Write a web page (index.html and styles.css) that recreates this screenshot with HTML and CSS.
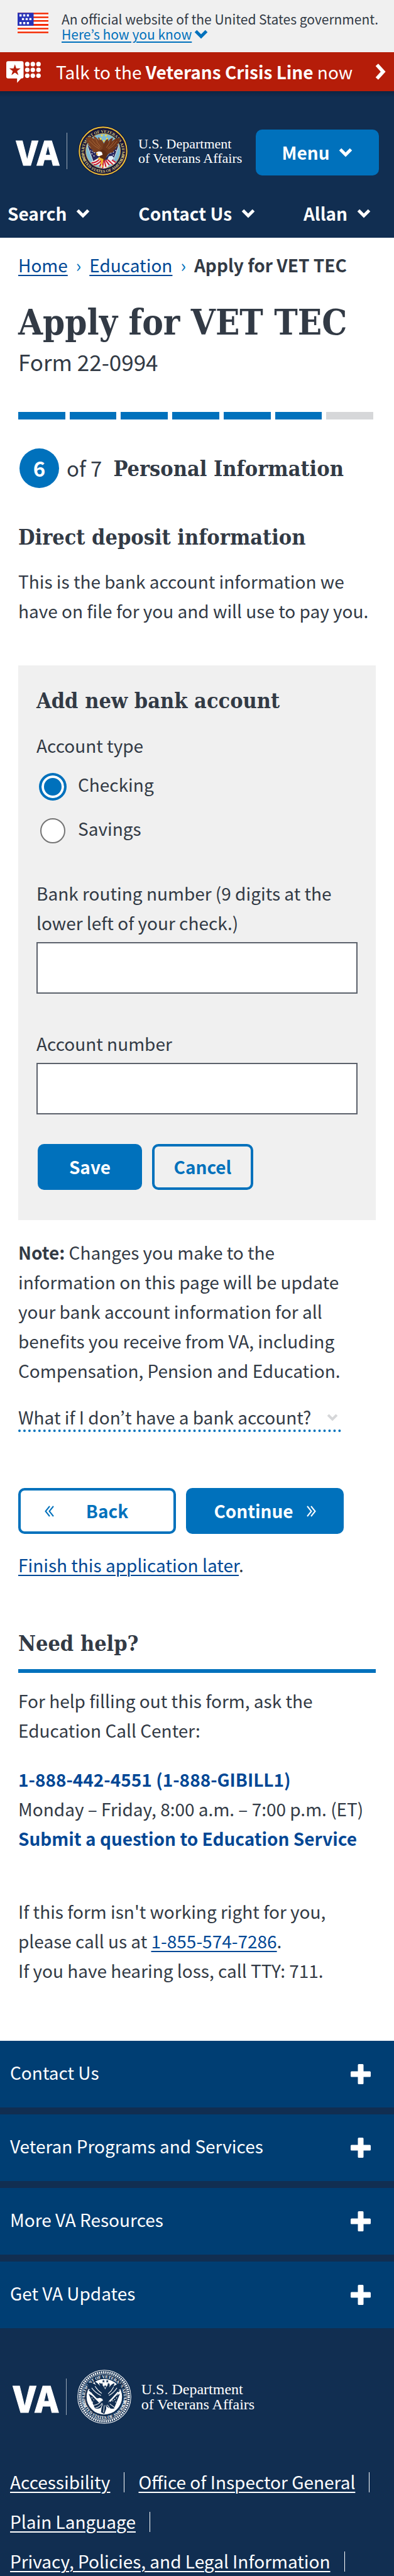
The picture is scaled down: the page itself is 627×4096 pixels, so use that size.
FILE: index.html
```html
<!DOCTYPE html>
<html lang="en">
<head>
<meta charset="utf-8">
<meta name="viewport" content="width=device-width, initial-scale=1">
<title>Apply for VET TEC</title>
<link rel="stylesheet" href="styles.css">
</head>
<body>
<svg class="defs" aria-hidden="true">
  <symbol id="chevron" viewBox="0 0 22 16"><path d="M2.5 3.5 11 12l8.5-8.5" fill="none" stroke="currentColor" stroke-width="5"/></symbol>
  <symbol id="plus" viewBox="0 0 32 32"><path d="M13 0h6a1.500 1.500 0 0 1 1.500 1.500v10h10A1.500 1.500 0 0 1 32 13v6a1.500 1.500 0 0 1-1.500 1.500h-10v10A1.500 1.500 0 0 1 19 32h-6a1.500 1.500 0 0 1-1.500-1.500v-10h-10A1.500 1.500 0 0 1 0 19v-6a1.500 1.500 0 0 1 1.500-1.500h10v-10A1.500 1.500 0 0 1 13 0z" fill="currentColor"/></symbol>
  <path id="arc-top" d="M-75 57A92 92 0 1 1 75 57" fill="none"/>
  <path id="arc-bottom" d="M-104 20A106 106 0 0 0 104 20" fill="none"/>
  <path id="wing-left" d="M-84-64q4 10 10 15 -6-1-8-3 4 14 16 20 -7 0-9-2 6 13 18 17 -7 1-10-1 8 12 20 14 -5 3-8 2 10 11 24 9l20 14 26-14-6-22c-2-24-14-40-32-52-2 6 2 14 4 18-8-12-18-20-28-24 0 6 4 12 8 18-12-10-26-14-45-9z"/>
  <path id="wing-right" d="M84-62q-4 10-10 15 6-1 8-3-4 14-16 20 7 0 9-2-6 13-18 17 7 1 10-1-8 12-20 14 5 3 8 2-10 11-22 10l-22 20-20-20 6-22c4-22 12-38 26-50 4 6 2 12 0 18 8-12 16-18 24-20 2 6-2 12-6 18 12-10 26-20 43-16z"/>
</svg>

<div class="gov">
  <svg class="flag" viewBox="0 0 50 34" aria-hidden="true">
    <rect width="50" height="33" fill="#fff"/>
    <path d="M0 0h50v2.500H0zM0 6h50v2.500H0zM0 12h50v2.500H0zM0 18h50v3H0zM0 24.500h50v2.500H0zM0 30.500h50v2.500H0z" fill="#f42a02"/>
    <path d="M0 0h26v21H0z" fill="#2632b8"/>
    <path d="M3 2.500h3.500v3.500H3zM9 2.500h3.500v3.500H9zM15 2.500h3.500v3.500H15zM7 8.500h3.500v3.500H7zM13 8.500h3.500v3.500H13zM19 8.500h3.500v3.500H19zM3 15h3.500v3.500H3zM9 15h3.500v3.500H9zM15 15h3.500v3.500H15z" fill="#fff"/>
  </svg>
  <div class="gov-text">
    <div>An official website of the United States government.</div>
    <a class="gov-link" href="#"><span>Here’s how you know</span><svg class="chev" aria-hidden="true"><use href="#chevron"/></svg></a>
  </div>
</div>

<a class="crisis" href="#">
  <svg class="crisis-icon" viewBox="0 0 56 35" fill="#fff" aria-hidden="true">
    <path d="M3 0h22a3 3 0 0 1 3 3v22a3 3 0 0 1-3 3h-1l-6.500 7v-7H3a3 3 0 0 1-3-3V3a3 3 0 0 1 3-3z"/>
    <path d="m14 5 2.200 6.700h7l-5.700 4.200 2.200 6.800-5.700-4.200-5.700 4.200 2.200-6.800-5.700-4.200h7z" fill="#b51d09"/>
    <circle cx="34" cy="4.700" r="3.700"/><circle cx="43" cy="4.700" r="3.700"/><circle cx="52.200" cy="4.700" r="3.700"/>
    <circle cx="34" cy="14" r="3.700"/><circle cx="43" cy="14" r="3.700"/><circle cx="52.200" cy="14" r="3.700"/>
    <circle cx="34" cy="23.400" r="3.700"/><circle cx="43" cy="23.400" r="3.700"/><circle cx="52.200" cy="23.400" r="3.700"/>
  </svg>
  <span class="crisis-text">Talk to the <b>Veterans Crisis Line</b> now</span>
  <svg class="crisis-arrow" viewBox="0 0 18 28" aria-hidden="true"><path d="m3 2.500 10.500 11.500L3 25.500" fill="none" stroke="#fff" stroke-width="6"/></svg>
</a>

<header class="header">
  <div class="header-top">
    <a class="logo" href="#" aria-label="U.S. Department of Veterans Affairs">
      <span class="va">VA</span>
      <span class="logo-rule"></span>
      <svg class="seal" viewBox="-122 -122 244 244">
        <circle r="121" fill="#17153a"/>
        <circle r="115" fill="none" stroke="#f0c436" stroke-width="6"/>
        <circle r="84" fill="#7db9d6" stroke="#d9b54a" stroke-width="3"/>
        <g class="seal-text" fill="#d9c679">
          <text><textPath href="#arc-top" startOffset="50%" text-anchor="middle">DEPARTMENT OF VETERANS AFFAIRS</textPath></text>
          <text><textPath href="#arc-bottom" startOffset="50%" text-anchor="middle">UNITED STATES OF AMERICA</textPath></text>
        </g>
        <circle cx="-97" cy="16" r="3" fill="#d9c679"/><circle cx="97" cy="16" r="3" fill="#d9c679"/>
        <path d="M-76-28-42 66Q-20 62-2 40L-40 4zM76-28 44 60Q20 60 8 40L40 4z" fill="#28285e"/>
        <path d="M-78-30-40 72M78-30 42 68" stroke="#e9e4d4" stroke-width="3"/>
        <path d="M-62-2l4 4m6-2 4 4m-8 8 4 4m8-10 4 4m-6 12 4 4m8-12 4 4M64-4l-4 4m-8 4-4 4m4 10-4 4m-8-14-4 4m4 14-4 4" stroke="#fff" stroke-width="4"/>
        <path d="M-60 54q24-8 50-30l10 24q20-2 30-14l36 20q-16 16-34 10-8 18-30 22-16-4-16-20-28 10-46-12z" fill="#f3eee6"/>
        <path d="M-56 58q26 0 46-26M-46 68q24-2 40-26M-16 76l12-32M-2 84l4-38M14 78 6 44M30 68 12 44M48 66 22 42M62 56 34 38" fill="none" stroke="#c9152e" stroke-width="6"/>
        <use href="#wing-left" fill="#7a3f1f"/><use href="#wing-right" fill="#6b3419"/>
        <path d="M-68-50q22 26 50 40M-54-54q14 22 38 38M-36-60q6 22 24 40M68-48q-18 26-42 40M54-48q-12 22-32 36M34-52q-4 20-18 36" fill="none" stroke="#a8683a" stroke-width="3"/>
        <path d="M-6-8q24 6 28 28l-16 28-18-10-14-28z" fill="#5b2b14"/>
        <path d="M-32 8q10-10 26-2l4 12-18 8q-8-2-12-8z" fill="#fff"/><path d="M-34 10l10 4-6 8q-4-4-4-12z" fill="#e9a820"/>
        <path d="M28 26l16-2 10 10-14 14-18-8z" fill="#dcebf5"/>
        <path d="m-22 30 24 10-6 28-8-4 2-18-14-6zM-4 66l8 12-12-2z" fill="#f0b62a"/>
        <g fill="#ecd84c"><circle cx="-6" cy="-75" r="5"/><circle cx="14" cy="-75" r="5"/><circle cx="-12" cy="-59" r="5"/><circle cx="4" cy="-49" r="5"/><circle cx="19" cy="-60" r="5"/></g>
      </svg>
      <span class="logo-name">U.S. Department<br>of Veterans Affairs</span>
    </a>
    <button class="btn menu" type="button">Menu <svg class="chev" aria-hidden="true"><use href="#chevron"/></svg></button>
  </div>
  <nav class="nav">
    <button type="button">Search <svg class="chev" aria-hidden="true"><use href="#chevron"/></svg></button>
    <button type="button">Contact Us <svg class="chev" aria-hidden="true"><use href="#chevron"/></svg></button>
    <button type="button">Allan <svg class="chev" aria-hidden="true"><use href="#chevron"/></svg></button>
  </nav>
</header>

<main class="main">
  <nav class="crumbs" aria-label="Breadcrumb">
    <a href="#">Home</a><span class="sep">›</span><a href="#">Education</a><span class="sep">›</span><b>Apply for VET TEC</b>
  </nav>
  <h1>Apply for VET TEC</h1>
  <p class="form-no">Form 22-0994</p>
  <div class="progress" role="progressbar" aria-valuemin="0" aria-valuemax="7" aria-valuenow="6" aria-label="Form progress">
    <i></i><i></i><i></i><i></i><i></i><i></i><i class="todo"></i>
  </div>
  <div class="step"><span class="step-num">6</span><span class="step-of">of 7</span><h2>Personal Information</h2></div>
  <h2 class="section-title">Direct deposit information</h2>
  <p class="intro">This is the bank account information we have on file for you and will use to pay you.</p>

  <form class="card">
    <h3>Add new bank account</h3>
    <fieldset>
      <legend>Account type</legend>
      <div class="radio"><input type="radio" name="type" id="checking" checked><label for="checking">Checking</label></div>
      <div class="radio"><input type="radio" name="type" id="savings"><label for="savings">Savings</label></div>
    </fieldset>
    <label class="field-label" for="routing">Bank routing number (9 digits at the lower left of your check.)</label>
    <input class="field" id="routing" type="text">
    <label class="field-label" for="account">Account number</label>
    <input class="field" id="account" type="text">
    <div class="card-actions">
      <button class="btn save" type="button">Save</button>
      <button class="btn outline cancel" type="button">Cancel</button>
    </div>
  </form>

  <p class="note"><b>Note:</b> Changes you make to the information on this page will be update your bank account information for all benefits you receive from VA, including Compensation, Pension and Education.</p>
  <button class="more" type="button">What if I don’t have a bank account? <svg class="chev" aria-hidden="true"><use href="#chevron"/></svg></button>

  <div class="pager">
    <button class="btn outline back" type="button"><svg class="dbl" viewBox="0 0 15 18" aria-hidden="true"><path d="M8 1 1.500 9 8 17M14 1 7.500 9 14 17" fill="none" stroke="currentColor" stroke-width="2"/></svg>Back</button>
    <button class="btn next" type="button">Continue<svg class="dbl" viewBox="0 0 15 18" aria-hidden="true"><path d="M1 1l6.500 8L1 17M7 1l6.500 8L7 17" fill="none" stroke="currentColor" stroke-width="2"/></svg></button>
  </div>
  <p class="finish"><a href="#">Finish this application later</a>.</p>

  <section class="help">
    <h2>Need help?</h2>
    <p>For help filling out this form, ask the Education Call Center:</p>
    <p class="contact"><a href="#">1-888-442-4551 (1-888-GIBILL1)</a><br>Monday – Friday, 8:00 a.m. – 7:00 p.m. (ET)<br><a href="#">Submit a question to Education Service</a></p>
    <p class="tech">If this form isn't working right for you, please call us at <a href="#">1-855-574-7286</a>.<br>If you have hearing loss, call TTY: 711.</p>
  </section>
</main>

<footer class="footer">
  <div class="panels">
    <button type="button">Contact Us <svg class="plus" aria-hidden="true"><use href="#plus"/></svg></button>
    <button type="button">Veteran Programs and Services <svg class="plus" aria-hidden="true"><use href="#plus"/></svg></button>
    <button type="button">More VA Resources <svg class="plus" aria-hidden="true"><use href="#plus"/></svg></button>
    <button type="button">Get VA Updates <svg class="plus" aria-hidden="true"><use href="#plus"/></svg></button>
  </div>
  <a class="logo footer-logo" href="#" aria-label="U.S. Department of Veterans Affairs">
    <span class="va">VA</span>
    <span class="logo-rule"></span>
    <svg class="seal" viewBox="-128 -128 256 256">
      <circle r="126" fill="none" stroke="#fff" stroke-width="3"/>
      <circle r="116" fill="none" stroke="#fff" stroke-width="10" stroke-dasharray="6 4"/>
      <circle r="108" fill="none" stroke="#fff" stroke-width="2"/>
      <circle r="84" fill="#fff"/>
      <g class="seal-text" fill="#fff">
        <text><textPath href="#arc-top" startOffset="50%" text-anchor="middle">DEPARTMENT OF VETERANS AFFAIRS</textPath></text>
        <text><textPath href="#arc-bottom" startOffset="50%" text-anchor="middle">UNITED STATES OF AMERICA</textPath></text>
      </g>
      <g fill="#112e51">
        <path d="M-74-14-44 56Q-20 60-2 40L-40 4zM74-14 46 56Q20 60 8 40L40 4z"/>
        <use href="#wing-left"/><use href="#wing-right"/>
        <path d="M-6-8q24 6 28 28l-14 40-8 22-16-8 4-30-14-28z"/>
        <path d="m-4-81 2 5h5l-4 4 2 5-5-3-5 3 2-5-4-4h5zM14-81l2 5h5l-4 4 2 5-5-3-5 3 2-5-4-4h5zM-12-66l2 5h5l-4 4 2 5-5-3-5 3 2-5-4-4h5zM20-66l2 5h5l-4 4 2 5-5-3-5 3 2-5-4-4h5zM4-56l2 5h5l-4 4 2 5-5-3-5 3 2-5-4-4h5z"/>
      </g>
      <path d="M-34 12q10-12 24-2l4 8-14 4q-10-2-14-10z" fill="#fff"/>
      <path d="M-66-18-22 26M66-22 26 22" stroke="#fff" stroke-width="7"/>
      <path d="M-60-42q18 24 44 36M-44-50q12 20 32 34M60-42q-16 24-38 36M44-46q-10 20-26 32M-50 40q22-2 36-20M-44 54q22-4 34-24M-20 64l12-30M-4 74l4-34M14 68 8 40M30 60 14 38M48 50 26 34" fill="none" stroke="#fff" stroke-width="3"/>
      <path d="M-60 4l3 3m5 6 3 3m-8 8 3 3M60 4l-3 3m-6 5-3 3m7 8-3 3m-10-8-3 3" stroke="#fff" stroke-width="4"/>
    </svg>
    <span class="logo-name">U.S. Department<br>of Veterans Affairs</span>
  </a>
  <ul class="links">
    <li><a href="#">Accessibility</a></li>
    <li><a href="#">Office of Inspector General</a></li>
    <li><a href="#">Plain Language</a></li>
    <li><a href="#">Privacy, Policies, and Legal Information</a></li>
  </ul>
</footer>
</body>
</html>
```
FILE: styles.css
```css
* { box-sizing: border-box; }

body {
  margin: 0;
  background: #fff;
  color: #323a45;
  font-family: "Noto Sans CJK KR", "Open Sans", sans-serif;
  font-size: 28px;
  line-height: 47px;
}

h1, h2, h3, p, ul, fieldset { margin: 0; padding: 0; border: 0; }
h1, h2, h3 { font-family: "DejaVu Serif Condensed", "DejaVu Serif", serif; font-weight: 700; }
h2, h3 { font-size: 34px; line-height: 40px; }
button { font: inherit; color: inherit; background: none; border: 0; padding: 0; cursor: pointer; }
a { color: #004795; text-decoration-thickness: 2px; text-underline-offset: 4px; }
svg { display: block; flex: none; }
.defs { position: absolute; width: 0; height: 0; }
.chev { width: 22px; height: 16px; }

/* Government banner */
.gov { display: flex; gap: 21px; padding: 18px 20px 17px 28px; background: #f0f0f0; font-size: 21px; line-height: 24px; }
.flag { width: 49px; height: 34px; margin-top: 2px; }
.gov-link { display: flex; align-items: center; gap: 4px; color: #0071bc; text-decoration: none; }
.gov-link span { text-decoration: underline; text-decoration-thickness: 2px; text-underline-offset: 3px; }

/* Crisis line */
.crisis { display: flex; align-items: center; height: 62px; padding: 0 13px 0 10px; background: #b51d09; color: #fff; text-decoration: none; }
.crisis-icon { width: 55px; height: 35px; margin-right: 24px; }
.crisis-text { flex: 1; }
.crisis-arrow { width: 17px; height: 28px; }

/* Header */
.header { padding: 55px 0 19px; background: linear-gradient(#0d2543, #112e51 10px); color: #fff; }
.header-top { display: flex; align-items: center; justify-content: space-between; padding: 0 24px 0 26px; }
.logo { display: flex; align-items: center; color: #fff; text-decoration: none; }
.va { font-size: 53px; line-height: 53px; font-weight: 900; -webkit-text-stroke: 1px #fff; }
.logo-rule { width: 1px; height: 58px; margin: 0 17px 0 12px; background: #9aa8b8; }
.seal { width: 80px; height: 80px; }
.seal-text { font: 700 20px "Liberation Serif", serif; }
.logo-name { margin-left: 16px; font: 22px/23px "Liberation Serif", serif; }
.btn { display: flex; align-items: center; justify-content: center; height: 73px; border-radius: 10px; background: #0071bc; color: #fff; font-weight: 700; }
.outline { background: none; border: 4px solid #0071bc; color: #0071bc; }
.menu { gap: 15px; width: 196px; margin-top: 4px; }
.nav { display: flex; justify-content: space-between; margin-top: 39px; padding: 0 37px 0 12px; font-weight: 700; line-height: 40px; }
.nav button { display: flex; align-items: center; gap: 15px; }

/* Page body */
.main { padding: 23px 29px 88px; }
.crumbs { display: flex; gap: 13px; line-height: 40px; }
.sep { color: #0071bc; }
h1 { margin-top: 39px; font-size: 56px; line-height: 64px; }
.form-no { margin-top: 7px; font-size: 35px; line-height: 48px; }
.progress { display: flex; gap: 7px; margin: 56px 4px 0 0; }
.progress i { flex: 1; height: 12px; background: #0071bc; }
.progress .todo { background: #d6d7d9; }
.step { display: flex; align-items: center; margin: 46px 0 0 2px; }
.step-num { width: 63px; height: 63px; border-radius: 50%; background: #0071bc; color: #fff; font-weight: 700; font-size: 33px; line-height: 63px; text-align: center; }
.step-of { margin: 0 18px 0 12px; font-size: 33px; }
.section-title { margin-top: 58px; }
.intro { margin-top: 27px; }

/* Bank account form */
.card { margin-top: 63px; padding: 36px 29px 48px; background: #f0f0f0; }
.card legend { display: block; padding: 28px 0 0; }
.radio { display: flex; align-items: center; height: 48px; margin-top: 14px; }
.radio + .radio { margin-top: 22px; }
.radio input { appearance: none; width: 40px; height: 40px; margin: 8px 20px 0 6px; border: 2px solid #757575; border-radius: 50%; background: #fff; }
.radio input:checked { border: 2px solid #0071bc; background: #0071bc; box-shadow: 0 0 0 2px #0071bc, inset 0 0 0 4px #fff; }
.field-label { display: block; margin-top: 56px; }
.field { display: block; width: 100%; height: 82px; margin-top: 7px; padding: 0 16px; border: 2px solid #5b616b; border-radius: 0; background: #fff; font: inherit; }
.card-actions { display: flex; gap: 16px; margin: 47px 0 0 2px; }
.save { width: 166px; }
.cancel { width: 161px; }

/* After the form */
.note { margin-top: 28px; padding-right: 20px; }
.more { display: inline-flex; align-items: center; gap: 25px; margin-top: 30px; padding-right: 5px; border-bottom: 4px dotted #0071bc; line-height: 40px; }
.more .chev { width: 18px; height: 13px; color: #d6d7d9; }
.pager { display: grid; grid-template-columns: 1fr 1fr; gap: 16px; margin-top: 89px; padding-right: 51px; }
.dbl { width: 15px; height: 18px; }
.back { gap: 51px; padding-right: 34px; }
.next { gap: 21px; }
.finish { margin-top: 26px; }

.help { margin-top: 81px; }
.help h2 { padding-bottom: 21px; border-bottom: 6px solid #0071bc; }
.help p { margin-top: 21px; }
.help .contact { margin-top: 31px; }
.contact a { font-weight: 700; text-decoration: none; }
.help .tech { margin-top: 69px; }

/* Footer */
.footer { background: #112e51; color: #fff; }
.panels { display: grid; gap: 11px; }
.panels button { display: flex; justify-content: space-between; padding: 27px 37px 32px 16px; background: #003e73; text-align: left; }
.plus { width: 32px; height: 32px; margin-top: 10px; }
.footer-logo { padding: 66px 21px 0; }
.footer-logo .va { font-size: 56px; }
.footer-logo .seal { width: 86px; height: 86px; }
.footer-logo .logo-name { font-size: 24px; line-height: 24px; }
.links { display: flex; flex-wrap: wrap; gap: 16px 22px; padding: 69px 16px 0; list-style: none; }
.links a { color: #fff; }
.links li { display: flex; align-items: center; gap: 22px; }
.links li::after { content: ""; width: 1px; height: 32px; background: #fff; }
```
